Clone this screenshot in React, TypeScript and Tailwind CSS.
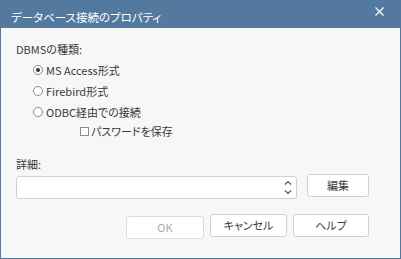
import { useState } from 'react';

// Font stack close to Meiryo UI: proportional kana at 11px
const jp = "font-['Noto_Sans_CJK_JP','Noto_Sans',sans-serif] [font-feature-settings:'palt']";

function Radio({ checked, label, onSelect }: { checked: boolean; label: string; onSelect: () => void }) {
  return (
    <button type="button" onClick={onSelect} className="flex h-[21px] items-center pl-[17px] text-left">
      <span className="flex h-[10px] w-[10px] items-center justify-center rounded-full border border-[#8a8a8a] bg-white">
        {checked && <span className="h-[4px] w-[4px] rounded-full bg-[#333]" />}
      </span>
      <span className="ml-[3px] text-[11px] leading-[16px] text-[#3a3a3a]">{label}</span>
    </button>
  );
}

function Button({ children, disabled, className }: { children: string; disabled?: boolean; className?: string }) {
  return (
    <button
      type="button"
      disabled={disabled}
      className={`flex h-[23px] items-center justify-center rounded-[3px] border bg-white text-[11px] ${
        disabled ? 'border-[#dcdcdc] bg-[#fafafa] text-[#a8a8a8]' : 'border-[#d2d2d2] text-[#3a3a3a]'
      } ${className ?? ''}`}
    >
      {children}
    </button>
  );
}

export default function App() {
  const [mode, setMode] = useState(0);
  const [savePw, setSavePw] = useState(false);

  return (
    <div className={`flex h-[259px] w-[401px] flex-col bg-[#53799f] px-px pb-px ${jp}`}>
      {/* Title bar */}
      <div className="flex h-[28px] shrink-0 items-start justify-between pl-[10px] pr-[16px]">
        <span className="pt-[9px] text-[11.5px] leading-[16px] text-white">データベース接続のプロパティ</span>
        <svg className="mt-[7px] h-[9px] w-[9px]" viewBox="0 0 9 9" fill="none" stroke="white" strokeWidth={1.2}>
          <path d="M0.5 0.5l8 8M8.5 0.5l-8 8" />
        </svg>
      </div>

      {/* Body */}
      <div className="flex flex-1 flex-col bg-[#f7f7f7] pl-[15px] pr-[31px] pt-[13px]">
        <p className="text-[11px] leading-[16px] text-[#3a3a3a]">DBMSの種類:</p>

        <div className="mt-[2px] flex flex-col">
          <Radio checked={mode === 0} label="MS Access形式" onSelect={() => setMode(0)} />
          <Radio checked={mode === 1} label="Firebird形式" onSelect={() => setMode(1)} />
          <Radio checked={mode === 2} label="ODBC経由での接続" onSelect={() => setMode(2)} />
          <button
            type="button"
            onClick={() => setSavePw(!savePw)}
            className="flex h-[18px] items-center pl-[64px] text-left"
          >
            <span className="h-[9px] w-[9px] border border-[#8a8a8a] bg-white" />
            <span className="ml-[2px] text-[11px] leading-[16px] text-[#3a3a3a]">パスワードを保存</span>
          </button>
        </div>

        <p className="mt-[16px] text-[11px] leading-[16px] text-[#3a3a3a]">詳細:</p>

        <div className="mt-[2px] flex items-start justify-between">
          <div className="mt-[2px] flex h-[23px] w-[281px] items-center justify-end rounded-[3px] border border-[#d0d0d0] bg-white pr-[4px]">
            <svg className="h-[17px] w-[8px]" viewBox="0 0 8 17" fill="none" stroke="#555" strokeWidth={1.2}>
              <path d="M1 5.5l3-3 3 3M1 11.5l3 3 3-3" />
            </svg>
          </div>
          <Button className="w-[62px]">編集</Button>
        </div>

        <div className="mt-[15px] flex items-start justify-end gap-[6px]">
          <Button disabled className="mt-[2px] w-[78px]">OK</Button>
          <Button className="w-[77px]">キャンセル</Button>
          <Button className="w-[76px]">ヘルプ</Button>
        </div>
      </div>
    </div>
  );
}
